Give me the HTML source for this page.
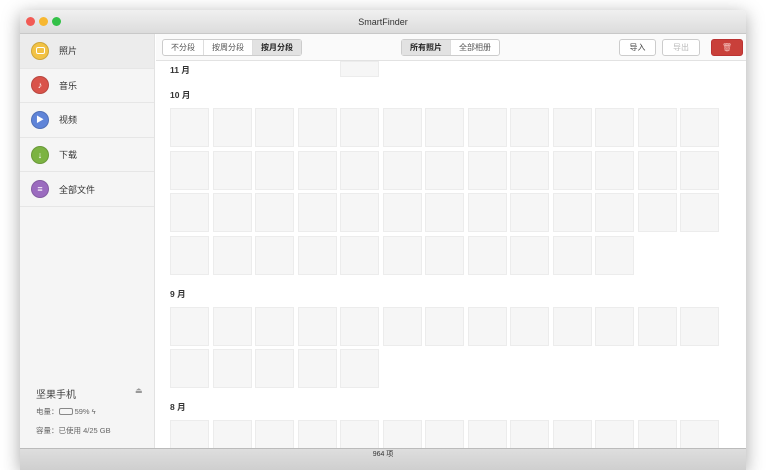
<!DOCTYPE html><html><head><style>
*{margin:0;padding:0;box-sizing:border-box}
body{width:772px;height:459px;background:#fff;font-family:"Liberation Sans","Noto Sans CJK SC",sans-serif;position:relative;overflow:hidden}
.win{position:absolute;left:20px;top:10px;width:726px;height:460px;background:#fff;border-radius:5px 5px 0 0;box-shadow:0 4px 18px rgba(0,0,0,.35);overflow:hidden}
.title{height:24px;background:linear-gradient(#f0f0f0,#dcdcdc);border-bottom:1px solid #c8c8c8;text-align:center;font-size:9px;line-height:24px;color:#333}
.dot{position:absolute;top:7px;width:9px;height:9px;border-radius:50%}
.side{position:absolute;left:0;top:24px;width:135px;height:414px;background:#f5f5f5;border-right:1px solid #e2e2e2}
.item{height:34.6px;border-bottom:1px solid #e6e6e6;display:flex;align-items:center;font-size:9px;color:#333}
.item .ic{width:18px;height:18px;border-radius:50%;margin:0 10px 0 11px;border:1px solid rgba(0,0,0,.15);color:#fff;font-size:9px;line-height:16px;text-align:center;font-weight:bold}
.tb{position:absolute;left:136px;top:24px;right:0;height:27px;border-bottom:1px solid #e2e2e2;background:#fafafa}
.seg{position:absolute;top:5px;height:17px;display:flex;border:1px solid #ccc;border-radius:3px;font-size:8px;color:#555;background:#fff}
.seg span{padding:0 8px;line-height:15px;border-right:1px solid #ddd}
.seg span:last-child{border:none}
.seg .on{background:#e2e2e2;color:#222;font-weight:bold}
.btn{position:absolute;top:5px;height:17px;border:1px solid #ccc;border-radius:3px;font-size:8px;line-height:15px;text-align:center;background:#fff;color:#444}
.t{position:absolute;width:39px;height:39px;background:#f6f6f6;border:1px solid #ececec}
.h{position:absolute;left:150px;font-size:8.5px;font-weight:bold;color:#333}
.status{position:absolute;left:0;top:438px;width:726px;height:22px;background:linear-gradient(#dedede,#cfcfcf);border-top:1px solid #bbb;font-size:7px;text-align:center;line-height:12px;color:#333}
</style></head><body>
<div class="win">
<div class="title">SmartFinder</div>
<div class="dot" style="left:6px;background:#f25b55"></div>
<div class="dot" style="left:19px;background:#f7b731"></div>
<div class="dot" style="left:32px;background:#33c148"></div>
<div class="side">
<div class="item" style="background:#ececec"><div class="ic" style="background:#f2c244"><span style="display:inline-block;width:9px;height:7px;border:1.5px solid #fff;border-radius:2px;vertical-align:0"></span></div>照片</div>
<div class="item"><div class="ic" style="background:#d9534a">♪</div>音乐</div>
<div class="item"><div class="ic" style="background:#5f84d8;font-size:8px">▶</div>视频</div>
<div class="item"><div class="ic" style="background:#7cb342">↓</div>下载</div>
<div class="item"><div class="ic" style="background:#9b6bbf">≡</div>全部文件</div>
<div style="position:absolute;left:16px;top:352px;font-size:10px;color:#444">坚果手机</div>
<div style="position:absolute;left:115px;top:352px;font-size:8px;color:#999">⏏</div>
<div style="position:absolute;left:16px;top:372px;font-size:7.5px;color:#666">电量：<span style="display:inline-block;width:14px;height:7px;border:1px solid #888;border-radius:2px;vertical-align:-1px"></span> 59% ϟ</div>
<div style="position:absolute;left:16px;top:391px;font-size:7.5px;color:#666">容量：已使用 4/25 GB</div>
</div>
<div class="tb">
<div class="seg" style="left:6px"><span>不分段</span><span>按周分段</span><span class="on">按月分段</span></div>
<div class="seg" style="left:245px"><span class="on">所有照片</span><span>全部相册</span></div>
<div class="btn" style="left:463px;width:37px">导入</div>
<div class="btn" style="left:506px;width:38px;color:#bbb">导出</div>
<div class="btn" style="left:555px;width:32px;background:#c9403a;border-color:#b33;color:#f5c0bc">🗑</div>
</div>
<div id="g"></div>
<div class="status">964 项</div>
</div>
<script>
var g=document.getElementById('g'),h='';
function H(t,y){h+='<div class="h" style="top:'+(y-10)+'px">'+t+'</div>';}
function R(y,n){for(var i=0;i<n;i++)h+='<div class="t" style="left:'+(150+i*42.5)+'px;top:'+(y-10)+'px"></div>';}
H('11 月',64);h+='<div class="t" style="left:320px;top:51px;height:16px"></div>';
H('10 月',89);R(108,13);R(151,13);R(193,13);R(236,11);
H('9 月',288);R(307,13);R(349,5);
H('8 月',401);R(420,13);
g.innerHTML=h;
</script>
</body></html>
